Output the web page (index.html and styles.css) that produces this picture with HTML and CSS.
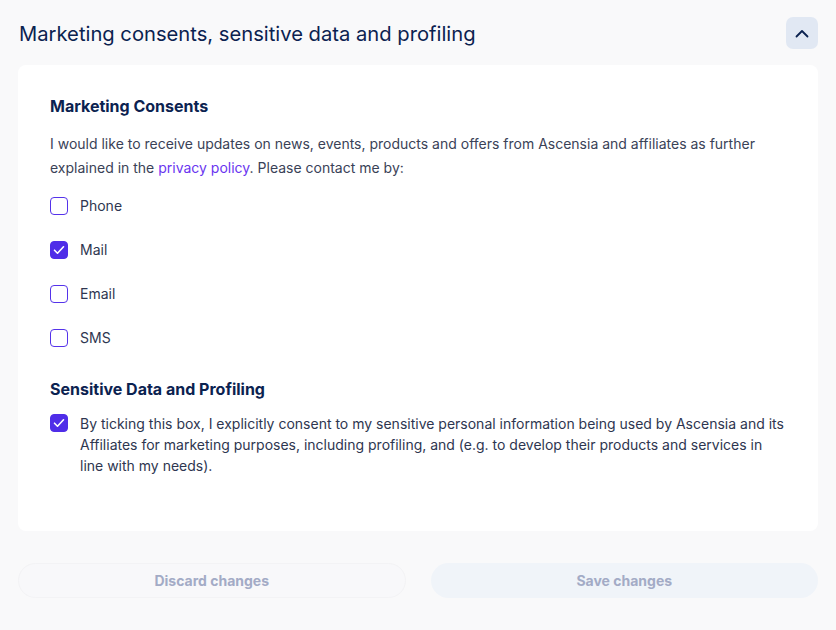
FILE: index.html
```html
<!DOCTYPE html>
<html lang="en">
<head>
<meta charset="UTF-8">
<meta name="viewport" content="width=device-width, initial-scale=1.0">
<title>Marketing consents</title>
<link rel="stylesheet" href="styles.css">
</head>
<body>
<div class="page">
    <div class="section-header">
        <h2>Marketing consents, sensitive data and profiling</h2>
        <button class="toggle-btn" aria-label="Collapse">
            <svg width="14" height="9" viewBox="0 0 14 9"><path d="M1.5 7.5 L7 2 L12.5 7.5" fill="none" stroke="#0b2250" stroke-width="1.8" stroke-linecap="round" stroke-linejoin="round"/></svg>
        </button>
    </div>

    <div class="card">
        <h3>Marketing Consents</h3>
        <p class="intro">I would like to receive updates on news, events, products and offers from Ascensia and affiliates as further explained in the <a href="#">privacy policy</a>. Please contact me by:</p>

        <div class="options">
            <label class="option"><span class="box"></span>Phone</label>
            <label class="option"><span class="box checked"><svg width="12" height="10" viewBox="0 0 12 10"><path d="M1.5 5.2 L4.5 8.2 L10.5 1.8" fill="none" stroke="#fff" stroke-width="1.6" stroke-linecap="round" stroke-linejoin="round"/></svg></span>Mail</label>
            <label class="option"><span class="box"></span>Email</label>
            <label class="option"><span class="box"></span>SMS</label>
        </div>

        <h3 class="second">Sensitive Data and Profiling</h3>
        <label class="option consent"><span class="box checked"><svg width="12" height="10" viewBox="0 0 12 10"><path d="M1.5 5.2 L4.5 8.2 L10.5 1.8" fill="none" stroke="#fff" stroke-width="1.6" stroke-linecap="round" stroke-linejoin="round"/></svg></span><span>By ticking this box, I explicitly consent to my sensitive personal information being used by Ascensia and its Affiliates for marketing purposes, including profiling, and (e.g. to develop their products and services in line with my needs).</span></label>
    </div>

    <div class="actions">
        <button class="btn discard">Discard changes</button>
        <button class="btn save">Save changes</button>
    </div>
</div>
</body>
</html>
```

FILE: styles.css
```css
body {
    margin: 0;
    background: #f9f9fa;
    font-family: Inter, 'Noto Sans', sans-serif;
    color: #3a4257;
}
.page {
    padding: 17px 18px 0 18px;
}
.section-header {
    display: flex;
    align-items: center;
    justify-content: space-between;
    height: 32px;
}
.section-header h2 {
    margin: 0 0 0 1px;
    font-size: 20.2px;
    font-weight: 400;
    color: #0b2250;
}
.toggle-btn {
    width: 32px;
    height: 32px;
    border: none;
    border-radius: 7px;
    background: #e1e8f3;
    display: flex;
    align-items: center;
    justify-content: center;
    padding: 0;
}
.card {
    margin-top: 16px;
    background: #fff;
    border-radius: 8px;
    padding: 29px 32px 55px 32px;
}
.card h3 {
    margin: 0;
    font-size: 16px;
    line-height: 24px;
    font-weight: 700;
    color: #0b2250;
}
.card h3.second {
    margin-top: 27px;
}
.intro {
    margin: 14px 0 0;
    font-size: 14px;
    line-height: 24px;
}
.intro a {
    color: #6a35f0;
    text-decoration: none;
}
.options {
    margin-top: 14px;
    display: flex;
    flex-direction: column;
    gap: 20px;
}
.option {
    display: flex;
    align-items: center;
    gap: 12px;
    font-size: 14px;
    line-height: 24px;
    color: #2e3650;
}
.box {
    flex: none;
    box-sizing: border-box;
    width: 18px;
    height: 18px;
    border: 1.5px solid #5533ea;
    border-radius: 4px;
    display: flex;
    align-items: center;
    justify-content: center;
}
.box.checked {
    background: #4f2de8;
    border-color: #4f2de8;
}
.consent {
    margin-top: 12px;
    align-items: flex-start;
    line-height: 21px;
}
.consent .box {
    margin-top: 1px;
}
.actions {
    margin-top: 32px;
    display: flex;
    gap: 25px;
}
.btn {
    flex: 1 1 0;
    box-sizing: border-box;
    padding: 0;
    height: 35px;
    border-radius: 18px;
    border: 1px solid transparent;
    font-family: Inter, 'Noto Sans', sans-serif;
    font-size: 14px;
    font-weight: 700;
    color: #a3abc6;
}
.discard {
    background: #f8f8fa;
    border-color: #f3f3f5;
}
.save {
    background: #f0f4f9;
}
```
